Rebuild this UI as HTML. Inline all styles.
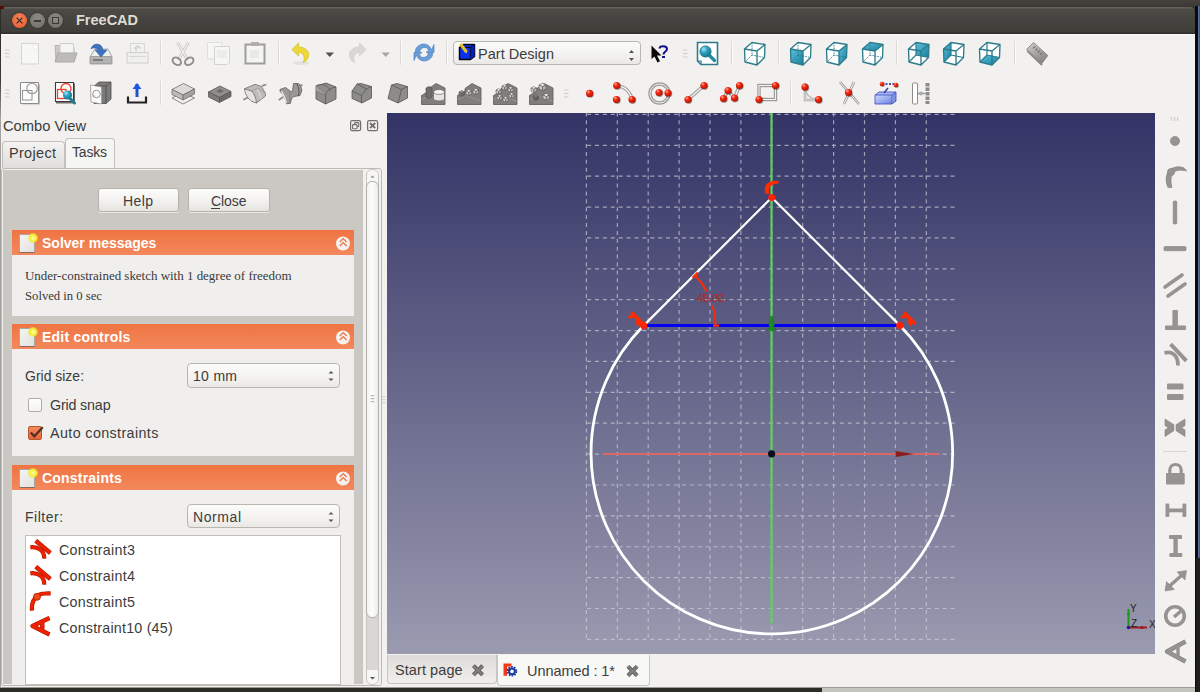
<!DOCTYPE html>
<html><head><meta charset="utf-8">
<style>
*{margin:0;padding:0;box-sizing:border-box}
html,body{width:1200px;height:692px;overflow:hidden;background:#2c2c28;font-family:"Liberation Sans",sans-serif;position:relative}
.a{position:absolute}
.t{white-space:nowrap}
svg{position:absolute;overflow:visible}

.btn{position:absolute;border:1px solid #b5b2ad;border-radius:3px;background:linear-gradient(#fdfdfc,#f1f0ee 60%,#e6e4e1);box-shadow:0 1px 0 rgba(255,255,255,.6)}
.combo{position:absolute;border:1px solid #b9b6b1;border-radius:4px;background:linear-gradient(#fbfbfa,#f3f2f0 60%,#e9e8e5)}
.hdr{position:absolute;background:linear-gradient(#ef7442,#f3885c)}
.sec{position:absolute;background:#f0efed}
.grip{position:absolute;width:4px;height:9px;background:repeating-linear-gradient(#c9c6c2 0 1px,transparent 1px 3px)}
.sep{position:absolute;width:1px;background:#dcdad6;box-shadow:1px 0 0 #fbfbfa}

</style></head><body>
<div class="a" style="left:0;top:0;width:1200px;height:10px;background:linear-gradient(#45423d,#3c3a36 6px,#36342f 7px)"></div>
<div class="a" style="left:1195px;top:6px;width:5px;height:686px;background:#0b0b0b"></div>
<div class="a" style="left:1198px;top:6px;width:2px;height:552px;background:linear-gradient(90deg,#6a7da8,#2f4c8c)"></div>
<div class="a" style="left:1196px;top:558px;width:4px;height:134px;background:#1e1e1c"></div>
<div class="a" style="left:822px;top:688px;width:373px;height:4px;background:#c6c4c1"></div>
<div class="a" style="left:1px;top:7px;width:1194px;height:27px;background:linear-gradient(#64615a 0,#64615a 1px,#4b4a45 2px,#3e3d39 25px,#2f2e2b 26px);border-radius:5px 5px 0 0"></div>
<div class="a" style="left:0;top:6px;width:4px;height:3px;background:#5a0a0a"></div>
<div class="a" style="left:12px;top:13px;width:15px;height:15px;border-radius:50%;background:radial-gradient(circle at 50% 35%,#f5835a,#e2592b);box-shadow:0 0 0 1px #3a3935"></div>
<svg style="left:12px;top:13px" width="15" height="15"><path d="M4.6 4.6L10.4 10.4M10.4 4.6L4.6 10.4" stroke="#3b2a22" stroke-width="1.3"/></svg>
<div class="a" style="left:30px;top:13px;width:15px;height:15px;border-radius:50%;background:radial-gradient(circle at 50% 35%,#8d8c86,#6b6a65);box-shadow:0 0 0 1px #3a3935"></div>
<div class="a" style="left:34px;top:20px;width:7px;height:1.5px;background:#3b3a36"></div>
<div class="a" style="left:47.5px;top:13px;width:15px;height:15px;border-radius:50%;background:radial-gradient(circle at 50% 35%,#8d8c86,#6b6a65);box-shadow:0 0 0 1px #3a3935"></div>
<div class="a" style="left:51.5px;top:17px;width:7px;height:7px;border:1.2px solid #3b3a36"></div>
<div class="a t" style="left:76px;top:10.98px;font-size:14.5px;line-height:18px;color:#dfdbd2;font-weight:bold;">FreeCAD</div>
<div class="a" style="left:1px;top:34px;width:1194px;height:653px;background:linear-gradient(#fdfdfd 0,#fdfdfd 1px,#f2f1f0 1px)"></div>
<div class="a" style="left:1px;top:687px;width:1194px;height:1px;background:#9c9a96"></div>
<div class="a" style="left:0;top:34px;width:1px;height:654px;background:linear-gradient(#2e2e2b 0,#3a3a37 45px,#a3a29f 85px,#a3a29f 100%)"></div>
<svg style="left:5px;top:49px" width="5" height="9"><path d="M0 1H4.5M0 4.5H4.5M0 8H4.5" stroke="#cfccc8" stroke-width="1"/></svg>
<svg style="left:5px;top:89px" width="5" height="9"><path d="M0 1H4.5M0 4.5H4.5M0 8H4.5" stroke="#cfccc8" stroke-width="1"/></svg>
<svg style="left:683px;top:49px" width="5" height="9"><path d="M0 1H4.5M0 4.5H4.5M0 8H4.5" stroke="#cfccc8" stroke-width="1"/></svg>
<svg style="left:564px;top:89px" width="5" height="9"><path d="M0 1H4.5M0 4.5H4.5M0 8H4.5" stroke="#cfccc8" stroke-width="1"/></svg>
<div class="a" style="left:160px;top:41px;width:1px;height:24px;background:#dad8d4"></div>
<div class="a" style="left:161px;top:41px;width:1px;height:24px;background:#fbfbfa"></div>
<div class="a" style="left:278px;top:41px;width:1px;height:24px;background:#dad8d4"></div>
<div class="a" style="left:279px;top:41px;width:1px;height:24px;background:#fbfbfa"></div>
<div class="a" style="left:400px;top:41px;width:1px;height:24px;background:#dad8d4"></div>
<div class="a" style="left:401px;top:41px;width:1px;height:24px;background:#fbfbfa"></div>
<div class="a" style="left:446px;top:41px;width:1px;height:24px;background:#dad8d4"></div>
<div class="a" style="left:447px;top:41px;width:1px;height:24px;background:#fbfbfa"></div>
<div class="a" style="left:731px;top:41px;width:1px;height:24px;background:#dad8d4"></div>
<div class="a" style="left:732px;top:41px;width:1px;height:24px;background:#fbfbfa"></div>
<div class="a" style="left:778px;top:41px;width:1px;height:24px;background:#dad8d4"></div>
<div class="a" style="left:779px;top:41px;width:1px;height:24px;background:#fbfbfa"></div>
<div class="a" style="left:896px;top:41px;width:1px;height:24px;background:#dad8d4"></div>
<div class="a" style="left:897px;top:41px;width:1px;height:24px;background:#fbfbfa"></div>
<div class="a" style="left:1014px;top:41px;width:1px;height:24px;background:#dad8d4"></div>
<div class="a" style="left:1015px;top:41px;width:1px;height:24px;background:#fbfbfa"></div>
<div class="a" style="left:160px;top:81px;width:1px;height:24px;background:#dad8d4"></div>
<div class="a" style="left:161px;top:81px;width:1px;height:24px;background:#fbfbfa"></div>
<div class="a" style="left:790px;top:81px;width:1px;height:24px;background:#dad8d4"></div>
<div class="a" style="left:791px;top:81px;width:1px;height:24px;background:#fbfbfa"></div>
<div class="combo" style="left:453px;top:41px;width:188px;height:24px"></div>
<div class="a t" style="left:478px;top:44.98px;font-size:14.5px;line-height:18px;color:#3c3c3c;letter-spacing:0.025px;">Part Design</div>
<svg style="left:0;top:0" width="1200" height="120" viewBox="0 0 1200 120"><defs><radialGradient id="teal" cx=".35" cy=".3" r=".8"><stop offset="0" stop-color="#a8e6f8"/><stop offset=".4" stop-color="#2aa0c0"/><stop offset="1" stop-color="#136f86"/></radialGradient><linearGradient id="teal2" x1="0" y1="0" x2="1" y2="1"><stop offset="0" stop-color="#5cc0dc"/><stop offset="1" stop-color="#14809e"/></linearGradient><radialGradient id="redp" cx=".35" cy=".3" r=".75"><stop offset="0" stop-color="#ffb0a0"/><stop offset=".35" stop-color="#f22a10"/><stop offset="1" stop-color="#b01000"/></radialGradient><linearGradient id="blueb" x1="0" y1="0" x2="1" y2="1"><stop offset="0" stop-color="#d0dcff"/><stop offset="1" stop-color="#6a80e0"/></linearGradient></defs><path d="M21.5 43.5H38.5V64H21.5Z" fill="#f7f7f6" stroke="#d6d5d3"/><circle cx="35.5" cy="47" r="2.5" fill="#fdfdfd" stroke="#e2e1df" stroke-width=".6"/><path d="M55 45.5H60L61 47.5H74V61.5H56Z" fill="#c9c8c6" stroke="#b5b4b2"/><path d="M60 43.5H73.5V55H60Z" fill="#f4f4f3" stroke="#cfcecc"/><path d="M58 53H77L74 62H55Z" fill="#bdbcba" stroke="#aaa9a7"/><path d="M95 49H108L112 57V64H90V57Z" fill="#efefee" stroke="#a9a8a6"/><path d="M90.5 56.5H111.5V63.5H90.5Z" fill="#b4b3b1" stroke="#a2a19f"/><path d="M93 60H103" stroke="#6e6d6b" stroke-width="1.5"/><path d="M91 49C92 44 99 42 102 47L103 50H107L101 57L95 50H98C97 48 93 47 91 49Z" fill="#3d72be" stroke="#2f5fa3" stroke-width=".6"/><path d="M130.5 43.5H144.5V53H130.5Z" fill="#f2f2f1" stroke="#d8d7d5"/><path d="M136 51V47M134.5 48.5L137.5 46L140.5 48.5" stroke="#cfcecc" stroke-width="1.5" fill="none"/><path d="M127 52.5H148V63H127Z" fill="#efefee" stroke="#cfcecc" rx="2"/><path d="M129 56.5H146" stroke="#d8d7d5"/><path d="M177.5 42.5L186.5 58M188.5 42.5L179.5 58" stroke="#c9c8c6" stroke-width="2.8" fill="none"/><path d="M177.5 42.5L186.5 58M188.5 42.5L179.5 58" stroke="#f2f2f1" stroke-width="1.2" fill="none"/><ellipse transform="rotate(35 176.8 61.3)" cx="176.8" cy="61.3" rx="4.6" ry="3.3" fill="none" stroke="#8f8e8c" stroke-width="2"/><ellipse transform="rotate(-35 189.2 61.3)" cx="189.2" cy="61.3" rx="4.6" ry="3.3" fill="none" stroke="#8f8e8c" stroke-width="2"/><path d="M207.5 42.5H222V59H207.5Z" fill="#f6f6f5" stroke="#e0dfdd"/><path d="M214.5 46.5H229.5V62L227 64.5H214.5Z" fill="#f6f6f5" stroke="#d4d3d1"/><path d="M217 51H227M217 53H227M217 55H226M217 57H227" stroke="#e3e2e0"/><path d="M245.5 44.5H264.5V63.5H245.5Z" fill="#f5f5f4" stroke="#9f9e9c" stroke-width="2"/><path d="M251 42H259V46H251Z" fill="#b0afad"/><path d="M248 48H262V61H248Z" fill="#f4f4f3"/><path d="M250 51H259M250 53H259M250 55H258M250 57H259" stroke="#dfdedc"/><ellipse cx="301" cy="63" rx="8" ry="2" fill="#000" fill-opacity=".06"/><path d="M292 49.5L298.5 43V47C305 47 309.5 51 308.5 56C308 60 305 62 303 62.5C305 60 305 52 298.5 52.5V56Z" fill="#ecd937" stroke="#d1bc1c" stroke-width=".7"/><path d="M325.5 52.5H334L329.75 57Z" fill="#505050"/><path d="M366 49.5L359.5 43V47C353 47 348.5 51 349.5 56C350 60 353 62 355 62.5C353 60 353 52 359.5 52.5V56Z" fill="#d9d8d6" stroke="#cfcecc" stroke-width=".7"/><path d="M381.5 52.5H390L385.75 57Z" fill="#a8a7a5"/><path d="M431.5 50C430 45 425 43 421 44.5C417 46 415 49 415.5 52L420 51.5C420 49 422 47.5 425 47.5C427 47.5 428 49 428.5 50.5L426 52.5H434V44.5Z" fill="#6b9dd8" stroke="#4f82c4" stroke-width=".7"/><path d="M416.5 55C418 60 423 62 427 60.5C431 59 433 56 432.5 53L428 53.5C428 56 426 57.5 423 57.5C421 57.5 420 56 419.5 54.5L422 52.5H414V60.5Z" fill="#6b9dd8" stroke="#4f82c4" stroke-width=".7"/><path d="M459.5 47.5L463.5 44.5H474.5V56.5L470.5 59.5H459.5Z" fill="#0a30f0" stroke="#050510" stroke-width="1.5" stroke-linejoin="round"/><path d="M459.5 47.5H470.5V59.5M470.5 47.5L474.5 44.5" stroke="#050510" fill="none" stroke-width="1.2"/><path d="M470.5 47.5L474.5 44.5V56.5L470.5 59.5Z" fill="#0520b0"/><path d="M460.5 44L466.5 52" stroke="#e6c020" stroke-width="3.2" stroke-linecap="butt"/><path d="M465 52.5L467 53.5L466.8 51.5Z" fill="#c8c0a0"/><path d="M629 53L631.5 50L634 53Z M629 58L631.5 61L634 58Z" fill="#555"/><path d="M651.5 45.5V59L654.5 56.5L657.5 62.5L660 61.3L657 55.5H661.5Z" fill="#0b0b0b"/><path d="M659.5 48.5C659.5 45.5 667 45 667 49C667 51.5 663.5 51.5 663.5 54.5" fill="none" stroke="#12128a" stroke-width="2"/><rect x="662" y="56" width="3" height="2" fill="#12128a"/><path d="M697.5 42.5H717.5V64.5H701L697.5 61Z" fill="#fff" stroke="#2d7b8b" stroke-width="1.6"/><path d="M697.5 61H701V64.5" fill="none" stroke="#2d7b8b" stroke-width="1.2"/><path d="M709 55L714.5 60.5" stroke="#1f8aa3" stroke-width="3.2" stroke-linecap="round"/><circle cx="705.5" cy="51.5" r="5.6" fill="url(#teal)" stroke="#1a6e80" stroke-width=".8"/><path d="M752.0 42.5L765.0 44.5L764.5 57.5L757.0 65.0L745.0 62.0L744.5 49.0Z" fill="#fff"/><path d="M752.0 42.5L752.0 55.0M752.0 55.0L745.0 62.0M752.0 55.0L764.5 57.5" stroke="#2d7b8b" stroke-width="0.9" stroke-dasharray="1.5 1" fill="none"/><path d="M752.0 42.5L765.0 44.5L764.5 57.5L757.0 65.0L745.0 62.0L744.5 49.0ZM744.5 49.0L757.0 51.0L765.0 44.5M757.0 51.0L757.0 65.0" stroke="#2d7b8b" stroke-width="1.35" fill="none" stroke-linejoin="round"/><path d="M798.0 42.5L811.0 44.5L810.5 57.5L803.0 65.0L791.0 62.0L790.5 49.0Z" fill="#fff"/><path d="M790.5 49.0L803.0 51.0L803.0 65.0L791.0 62.0Z" fill="url(#teal2)"/><path d="M798.0 42.5L798.0 55.0M798.0 55.0L791.0 62.0M798.0 55.0L810.5 57.5" stroke="#2d7b8b" stroke-width="0.9" stroke-dasharray="1.5 1" fill="none"/><path d="M798.0 42.5L811.0 44.5L810.5 57.5L803.0 65.0L791.0 62.0L790.5 49.0ZM790.5 49.0L803.0 51.0L811.0 44.5M803.0 51.0L803.0 65.0" stroke="#2d7b8b" stroke-width="1.35" fill="none" stroke-linejoin="round"/><path d="M834.0 42.5L847.0 44.5L846.5 57.5L839.0 65.0L827.0 62.0L826.5 49.0Z" fill="#fff"/><path d="M839.0 51.0L847.0 44.5L846.5 57.5L839.0 65.0Z" fill="url(#teal2)"/><path d="M834.0 42.5L834.0 55.0M834.0 55.0L827.0 62.0M834.0 55.0L846.5 57.5" stroke="#2d7b8b" stroke-width="0.9" stroke-dasharray="1.5 1" fill="none"/><path d="M834.0 42.5L847.0 44.5L846.5 57.5L839.0 65.0L827.0 62.0L826.5 49.0ZM826.5 49.0L839.0 51.0L847.0 44.5M839.0 51.0L839.0 65.0" stroke="#2d7b8b" stroke-width="1.35" fill="none" stroke-linejoin="round"/><path d="M870.0 42.5L883.0 44.5L882.5 57.5L875.0 65.0L863.0 62.0L862.5 49.0Z" fill="#fff"/><path d="M870.0 42.5L883.0 44.5L875.0 51.0L862.5 49.0Z" fill="url(#teal2)"/><path d="M870.0 42.5L870.0 55.0M870.0 55.0L863.0 62.0M870.0 55.0L882.5 57.5" stroke="#2d7b8b" stroke-width="0.9" stroke-dasharray="1.5 1" fill="none"/><path d="M870.0 42.5L883.0 44.5L882.5 57.5L875.0 65.0L863.0 62.0L862.5 49.0ZM862.5 49.0L875.0 51.0L883.0 44.5M875.0 51.0L875.0 65.0" stroke="#2d7b8b" stroke-width="1.35" fill="none" stroke-linejoin="round"/><path d="M916.0 42.5L929.0 44.5L928.5 57.5L921.0 65.0L909.0 62.0L908.5 49.0Z" fill="#fff"/><path d="M916.0 42.5L929.0 44.5L928.5 57.5L916.0 55.0Z" fill="url(#teal2)"/><path d="M916.0 42.5L916.0 55.0M916.0 55.0L909.0 62.0M916.0 55.0L928.5 57.5" stroke="#2d7b8b" stroke-width="1.2" stroke-dasharray="none" fill="none"/><path d="M916.0 42.5L929.0 44.5L928.5 57.5L921.0 65.0L909.0 62.0L908.5 49.0ZM908.5 49.0L921.0 51.0L929.0 44.5M921.0 51.0L921.0 65.0" stroke="#2d7b8b" stroke-width="1.35" fill="none" stroke-linejoin="round"/><path d="M951.0 42.5L964.0 44.5L963.5 57.5L956.0 65.0L944.0 62.0L943.5 49.0Z" fill="#fff"/><path d="M943.5 49.0L951.0 42.5L951.0 55.0L944.0 62.0Z" fill="url(#teal2)"/><path d="M951.0 42.5L951.0 55.0M951.0 55.0L944.0 62.0M951.0 55.0L963.5 57.5" stroke="#2d7b8b" stroke-width="1.2" stroke-dasharray="none" fill="none"/><path d="M951.0 42.5L964.0 44.5L963.5 57.5L956.0 65.0L944.0 62.0L943.5 49.0ZM943.5 49.0L956.0 51.0L964.0 44.5M956.0 51.0L956.0 65.0" stroke="#2d7b8b" stroke-width="1.35" fill="none" stroke-linejoin="round"/><path d="M987.0 42.5L1000.0 44.5L999.5 57.5L992.0 65.0L980.0 62.0L979.5 49.0Z" fill="#fff"/><path d="M980.0 62.0L987.0 55.0L999.5 57.5L992.0 65.0Z" fill="url(#teal2)"/><path d="M987.0 42.5L987.0 55.0M987.0 55.0L980.0 62.0M987.0 55.0L999.5 57.5" stroke="#2d7b8b" stroke-width="1.2" stroke-dasharray="none" fill="none"/><path d="M987.0 42.5L1000.0 44.5L999.5 57.5L992.0 65.0L980.0 62.0L979.5 49.0ZM979.5 49.0L992.0 51.0L1000.0 44.5M992.0 51.0L992.0 65.0" stroke="#2d7b8b" stroke-width="1.35" fill="none" stroke-linejoin="round"/><defs><linearGradient id="rul" x1="0" y1="0" x2=".6" y2="1"><stop offset="0" stop-color="#d2d1cf"/><stop offset="1" stop-color="#858482"/></linearGradient></defs><path d="M1033.5 42.5L1047.8 55.5L1041 64.5L1026.5 49.5Z" fill="url(#rul)" stroke="#7a7977" stroke-width=".8" stroke-linejoin="round"/><path d="M1027.5 51L1042 65" stroke="#8c8b89" stroke-width="2"/><path d="M1035 46.5L1033.2 48.3M1037.3 48.6L1035.5 50.4M1039.6 50.7L1037.8 52.5M1041.9 52.8L1040.1 54.6" stroke="#6e6d6b" stroke-width="1.2"/><path d="M21.5 84.5H40V104.5H22.5Z" fill="#bdbcba"/><path d="M20.5 82.5H38.5V103.5H20.5Z" fill="#fdfdfd" stroke="#8c8b89"/><circle cx="32" cy="88.5" r="5.3" fill="none" stroke="#9a9997" stroke-width="1.1"/><rect x="22.5" y="90.5" width="9.5" height="9.5" fill="none" stroke="#9a9997" stroke-width="1.1"/><path d="M56 83.5H75V103.5H56Z" fill="#6e6d6b"/><path d="M55.5 82.5H73.5V101.5H55.5Z" fill="#fdfdfd" stroke="#3c3b39" stroke-width="1.1"/><circle cx="66" cy="88.5" r="5" fill="none" stroke="#ee4030" stroke-width="1.3"/><rect x="57.5" y="89.5" width="8.5" height="9" fill="none" stroke="#ee4030" stroke-width="1.3"/><path d="M70 98.5L74.5 103" stroke="#1a7f95" stroke-width="3" stroke-linecap="round"/><circle cx="67.5" cy="95" r="4.6" fill="url(#teal)"/><path d="M94 86L99 82H111V99L106 103.5H94Z" fill="#7b7a78" stroke="#4e4d4b" stroke-width=".8"/><path d="M94 86H106V103.5M106 86L111 82" fill="none" stroke="#4e4d4b" stroke-width=".8"/><path d="M90.5 85L101.5 87V104L91 102Z" fill="#fbfbfb" stroke="#9a9997" stroke-width=".8"/><circle cx="96.5" cy="94" r="3.8" fill="none" stroke="#8c8b89" stroke-width=".9"/><path d="M92 96H95" stroke="#aaa" stroke-width=".8"/><path d="M128 96.5V102.5H146V96.5" stroke="#222" stroke-width="2.2" fill="none"/><path d="M137 84V97" stroke="#1f55c8" stroke-width="3"/><path d="M132.5 89L137 83L141.5 89Z" fill="#1f55e8"/><path d="M172 98L183 104L194.5 98" fill="none" stroke="#7d7c7a" stroke-width=".9"/><path d="M176 96L172 98M190 96L194.5 98" stroke="#7d7c7a" stroke-width=".9"/><path d="M172 89.5L183.5 83.5L194.5 89L183 95Z" fill="#dcdbd9" stroke="#6e6d6b" stroke-width=".8"/><path d="M172 89.5L183 95V100L172 94.5Z" fill="#bebdbb" stroke="#6e6d6b" stroke-width=".8"/><path d="M183 95L194.5 89V94L183 100Z" fill="#a4a3a1" stroke="#6e6d6b" stroke-width=".8"/><path d="M208.5 92L220 86L231 91.5L219.5 97.5Z" fill="#8f8e8c" stroke="#555" stroke-width=".8"/><path d="M208.5 92L219.5 97.5V102.5L208.5 97Z" fill="#7d7c7a" stroke="#555" stroke-width=".8"/><path d="M219.5 97.5L231 91.5V96.5L219.5 102.5Z" fill="#6c6b69" stroke="#555" stroke-width=".8"/><path d="M216 91L220 89L224 91L220 93Z" fill="#6a6967"/><path d="M243.3 99.8L249.5 96.8M262 85.8L266.3 84.5" stroke="#8c8b89" stroke-width="1.8"/><path d="M244.5 88.8L255 84.3L261.5 86.5L265.5 93.5V96L256.5 103L249 92Z" fill="#bdbcba" stroke="#6e6d6b" stroke-width=".8" stroke-linejoin="round"/><path d="M244.5 88.8L251.5 91C254.5 94 256 98 256.5 103L252 101.5C248 99 245 94 244.5 88.8Z" fill="#e4e3e1" stroke="#6e6d6b" stroke-width=".8"/><path d="M251.5 91L258 88L265.5 93.5" stroke="#8a8987" stroke-width=".6" fill="none"/><path d="M257 89.5C259.5 92 260.5 95 261 99" stroke="#d6d5d3" stroke-width="1.3" fill="none"/><path d="M278.8 100L283.3 97.1M299.2 85.8L302.5 84.8" stroke="#8c8b89" stroke-width="1.8"/><path d="M280 89.5L285.5 87.5L289.5 90.5C290.5 91.5 291.5 92 292.5 91.5L293.5 83.5L298.5 83.5C300.5 85 302 88 301.7 91L300 95.5L294 96.5C292.5 97 291 99 290.5 103.3L286.5 103.8C285 98 283 93.5 280 91.5Z" fill="#9a9997" stroke="#5e5d5b" stroke-width=".8" stroke-linejoin="round"/><path d="M281.5 91C284 95 285.5 99 286.3 103" stroke="#ecebea" stroke-width="1.3" fill="none"/><path d="M296.8 84C299 87 299.5 92 298.3 96" stroke="#5a5957" stroke-width="1" fill="none"/><path d="M289.5 90.5L290 103" stroke="#7a7977" stroke-width=".8"/><path d="M316 86L326 83L336 87V99L325.5 104L316 99Z" fill="#8d8c8a" stroke="#555" stroke-width=".8"/><path d="M316 91L325.5 95.5V104M325.5 95.5C326 91 330 88 336 87M316 86C318 84 324 84 326 86C330 88 330 91 330 91" fill="none" stroke="#5a5957" stroke-width=".8"/><path d="M316 86V91L325.5 95.5" fill="#9e9d9b"/><path d="M352 91L357 84L361 83.5L371.5 86.5V98L362 103L352 98.5Z" fill="#8d8c8a" stroke="#555" stroke-width=".8"/><path d="M352 91L361.5 95.5L366.5 89M361.5 95.5V103M357 84L366.5 89L371.5 86.5" fill="none" stroke="#555" stroke-width=".8"/><path d="M391.5 85L397 83.5L407.5 86.5V98L398 103L388 98.5Z" fill="#8d8c8a" stroke="#555" stroke-width=".8"/><path d="M391.5 85L401.5 89.5L398 103M401.5 89.5L407.5 86.5" fill="none" stroke="#555" stroke-width=".8"/><path d="M421.5 95.5L429 91V88.5L436 83.5L445 88V104.5H421.5Z" fill="#7f7e7c" stroke="#5a5957" stroke-width=".8"/><path d="M421.5 99.5L430 95.5L445 101.5" fill="none" stroke="#9a9997" stroke-width=".8"/><path d="M426 88L429 86.5L432 88V97L429 98.5L426 97Z" fill="#6f6e6c" stroke="#4a4947" stroke-width=".6"/><path d="M433.5 92V99C435 101.5 443 101.5 444.5 99V92Z" fill="#e6e5e3" stroke="#5a5957" stroke-width=".6"/><ellipse cx="439" cy="92" rx="5.5" ry="2.4" fill="#f6f6f5" stroke="#5a5957" stroke-width=".6"/><path d="M457.5 95.5L465 91V88.5L472 83.5L481 88V104.5H457.5Z" fill="#7f7e7c" stroke="#5a5957" stroke-width=".8"/><path d="M457.5 99.5L466 95.5L481 101.5" fill="none" stroke="#9a9997" stroke-width=".8"/><path d="M459 92L461.8 90.6L464.6 92L461.8 93.4Z" fill="#9a9997" stroke="#5a5957" stroke-width=".6"/><path d="M459 92L461.8 93.4V96.48L459 95.08Z" fill="#7c7b79" stroke="#5a5957" stroke-width=".6"/><path d="M461.8 93.4L464.6 92V95.08L461.8 96.48Z" fill="#6a6967" stroke="#5a5957" stroke-width=".6"/><path d="M466 91L468.8 89.6L471.6 91L468.8 92.4Z" fill="#f4f4f3" stroke="#5a5957" stroke-width=".6"/><path d="M466 91L468.8 92.4V95.48L466 94.08Z" fill="#d6d5d3" stroke="#5a5957" stroke-width=".6"/><path d="M468.8 92.4L471.6 91V94.08L468.8 95.48Z" fill="#b9b8b6" stroke="#5a5957" stroke-width=".6"/><path d="M473 90L475.8 88.6L478.6 90L475.8 91.4Z" fill="#f4f4f3" stroke="#5a5957" stroke-width=".6"/><path d="M473 90L475.8 91.4V94.48L473 93.08Z" fill="#d6d5d3" stroke="#5a5957" stroke-width=".6"/><path d="M475.8 91.4L478.6 90V93.08L475.8 94.48Z" fill="#b9b8b6" stroke="#5a5957" stroke-width=".6"/><path d="M493.5 95.5L501 91V88.5L508 83.5L517 88V104.5H493.5Z" fill="#7f7e7c" stroke="#5a5957" stroke-width=".8"/><path d="M493.5 99.5L502 95.5L517 101.5" fill="none" stroke="#9a9997" stroke-width=".8"/><path d="M496 90L498.6 88.7L501.2 90L498.6 91.3Z" fill="#f4f4f3" stroke="#5a5957" stroke-width=".6"/><path d="M496 90L498.6 91.3V94.16L496 92.86Z" fill="#d6d5d3" stroke="#5a5957" stroke-width=".6"/><path d="M498.6 91.3L501.2 90V92.86L498.6 94.16Z" fill="#b9b8b6" stroke="#5a5957" stroke-width=".6"/><path d="M502 86L504.6 84.7L507.2 86L504.6 87.3Z" fill="#f4f4f3" stroke="#5a5957" stroke-width=".6"/><path d="M502 86L504.6 87.3V90.16L502 88.86Z" fill="#d6d5d3" stroke="#5a5957" stroke-width=".6"/><path d="M504.6 87.3L507.2 86V88.86L504.6 90.16Z" fill="#b9b8b6" stroke="#5a5957" stroke-width=".6"/><path d="M508 88L510.6 86.7L513.2 88L510.6 89.3Z" fill="#f4f4f3" stroke="#5a5957" stroke-width=".6"/><path d="M508 88L510.6 89.3V92.16L508 90.86Z" fill="#d6d5d3" stroke="#5a5957" stroke-width=".6"/><path d="M510.6 89.3L513.2 88V90.86L510.6 92.16Z" fill="#b9b8b6" stroke="#5a5957" stroke-width=".6"/><path d="M509 94L511.6 92.7L514.2 94L511.6 95.3Z" fill="#f4f4f3" stroke="#5a5957" stroke-width=".6"/><path d="M509 94L511.6 95.3V98.16L509 96.86Z" fill="#d6d5d3" stroke="#5a5957" stroke-width=".6"/><path d="M511.6 95.3L514.2 94V96.86L511.6 98.16Z" fill="#b9b8b6" stroke="#5a5957" stroke-width=".6"/><path d="M503 98L505.6 96.7L508.2 98L505.6 99.3Z" fill="#f4f4f3" stroke="#5a5957" stroke-width=".6"/><path d="M503 98L505.6 99.3V102.16L503 100.86Z" fill="#d6d5d3" stroke="#5a5957" stroke-width=".6"/><path d="M505.6 99.3L508.2 98V100.86L505.6 102.16Z" fill="#b9b8b6" stroke="#5a5957" stroke-width=".6"/><path d="M497 96L499.6 94.7L502.2 96L499.6 97.3Z" fill="#f4f4f3" stroke="#5a5957" stroke-width=".6"/><path d="M497 96L499.6 97.3V100.16L497 98.86Z" fill="#d6d5d3" stroke="#5a5957" stroke-width=".6"/><path d="M499.6 97.3L502.2 96V98.86L499.6 100.16Z" fill="#b9b8b6" stroke="#5a5957" stroke-width=".6"/><path d="M529.5 95.5L537 91V88.5L544 83.5L553 88V104.5H529.5Z" fill="#7f7e7c" stroke="#5a5957" stroke-width=".8"/><path d="M529.5 99.5L538 95.5L553 101.5" fill="none" stroke="#9a9997" stroke-width=".8"/><path d="M531 88L533.8 86.6L536.6 88L533.8 89.4Z" fill="#f4f4f3" stroke="#5a5957" stroke-width=".6"/><path d="M531 88L533.8 89.4V92.48L531 91.08Z" fill="#d6d5d3" stroke="#5a5957" stroke-width=".6"/><path d="M533.8 89.4L536.6 88V91.08L533.8 92.48Z" fill="#b9b8b6" stroke="#5a5957" stroke-width=".6"/><path d="M539 85L542.5 83.25L546.0 85L542.5 86.75Z" fill="#e8e7e5" stroke="#5a5957" stroke-width=".6"/><path d="M539 85L542.5 86.75V90.6L539 88.85Z" fill="#cfcecc" stroke="#5a5957" stroke-width=".6"/><path d="M542.5 86.75L546.0 85V88.85L542.5 90.6Z" fill="#b3b2b0" stroke="#5a5957" stroke-width=".6"/><path d="M533 96L535.8 94.6L538.6 96L535.8 97.4Z" fill="#8a8987" stroke="#5a5957" stroke-width=".6"/><path d="M533 96L535.8 97.4V100.48L533 99.08Z" fill="#6f6e6c" stroke="#5a5957" stroke-width=".6"/><path d="M535.8 97.4L538.6 96V99.08L535.8 100.48Z" fill="#5e5d5b" stroke="#5a5957" stroke-width=".6"/><path d="M543 95L546.2 93.4L549.4 95L546.2 96.6Z" fill="#f4f4f3" stroke="#5a5957" stroke-width=".6"/><path d="M543 95L546.2 96.6V100.11999999999999L543 98.52Z" fill="#d6d5d3" stroke="#5a5957" stroke-width=".6"/><path d="M546.2 96.6L549.4 95V98.52L546.2 100.11999999999999Z" fill="#b9b8b6" stroke="#5a5957" stroke-width=".6"/><circle cx="590.3000000000001" cy="94.2" r="3.6" fill="#000" fill-opacity=".35"/><circle cx="589.6" cy="93.4" r="3.6" fill="url(#redp)"/><path d="M617 86C624 86 630 91 632 99" stroke="#9c9b99" stroke-width="3.4" fill="none"/><path d="M617 86C624 86 630 91 632 99" stroke="#f4f4f3" stroke-width="1.3" fill="none"/><circle cx="617.4000000000001" cy="86.3" r="3.6" fill="#000" fill-opacity=".35"/><circle cx="616.7" cy="85.5" r="3.6" fill="url(#redp)"/><circle cx="617.2" cy="100.3" r="3.6" fill="#000" fill-opacity=".35"/><circle cx="616.5" cy="99.5" r="3.6" fill="url(#redp)"/><circle cx="632.7" cy="100.3" r="3.6" fill="#000" fill-opacity=".35"/><circle cx="632" cy="99.5" r="3.6" fill="url(#redp)"/><circle cx="659.5" cy="93.5" r="9.5" fill="none" stroke="#9c9b99" stroke-width="3.4"/><circle cx="659.5" cy="93.5" r="9.5" fill="none" stroke="#f4f4f3" stroke-width="1"/><circle cx="659.7" cy="93.3" r="3.6" fill="#000" fill-opacity=".35"/><circle cx="659" cy="92.5" r="3.6" fill="url(#redp)"/><circle cx="668.7" cy="93.8" r="3.6" fill="#000" fill-opacity=".35"/><circle cx="668" cy="93" r="3.6" fill="url(#redp)"/><path d="M688 99.5L704 85.5" stroke="#9c9b99" stroke-width="3.6" fill="none"/><path d="M688 99.5L704 85.5" stroke="#f4f4f3" stroke-width="1.4" fill="none"/><circle cx="688.7" cy="100.3" r="3.6" fill="#000" fill-opacity=".35"/><circle cx="688" cy="99.5" r="3.6" fill="url(#redp)"/><circle cx="704.7" cy="86.3" r="3.6" fill="#000" fill-opacity=".35"/><circle cx="704" cy="85.5" r="3.6" fill="url(#redp)"/><path d="M723.5 98.5L728 90.5L734.5 98L739.5 85.5" stroke="#9c9b99" stroke-width="3.4" fill="none"/><path d="M723.5 98.5L728 90.5L734.5 98L739.5 85.5" stroke="#f4f4f3" stroke-width="1.3" fill="none"/><circle cx="724.2" cy="99.3" r="3.6" fill="#000" fill-opacity=".35"/><circle cx="723.5" cy="98.5" r="3.6" fill="url(#redp)"/><circle cx="728.7" cy="91.3" r="3.6" fill="#000" fill-opacity=".35"/><circle cx="728" cy="90.5" r="3.6" fill="url(#redp)"/><circle cx="735.2" cy="98.8" r="3.6" fill="#000" fill-opacity=".35"/><circle cx="734.5" cy="98" r="3.6" fill="url(#redp)"/><circle cx="740.2" cy="86.3" r="3.6" fill="#000" fill-opacity=".35"/><circle cx="739.5" cy="85.5" r="3.6" fill="url(#redp)"/><rect x="759" y="85.5" width="16.5" height="14" fill="none" stroke="#9c9b99" stroke-width="3.4"/><rect x="759" y="85.5" width="16.5" height="14" fill="none" stroke="#f4f4f3" stroke-width="1"/><circle cx="759.7" cy="100.3" r="3.6" fill="#000" fill-opacity=".35"/><circle cx="759" cy="99.5" r="3.6" fill="url(#redp)"/><circle cx="776.2" cy="86.3" r="3.6" fill="#000" fill-opacity=".35"/><circle cx="775.5" cy="85.5" r="3.6" fill="url(#redp)"/><path d="M805 83V100H822" stroke="#a5a4a2" stroke-width="2.4" fill="none"/><path d="M805 88C806 96 812 99 818 99.5" stroke="#bbb" stroke-width="1.4" fill="none"/><path d="M805 83V100H822" stroke="#f4f4f3" stroke-width=".8" fill="none"/><circle cx="805.7" cy="87.8" r="3.6" fill="#000" fill-opacity=".35"/><circle cx="805" cy="87" r="3.6" fill="url(#redp)"/><circle cx="819.2" cy="100.3" r="3.6" fill="#000" fill-opacity=".35"/><circle cx="818.5" cy="99.5" r="3.6" fill="url(#redp)"/><path d="M840 82L859 104M854 82L844 104" stroke="#9a9997" stroke-width="2.6"/><path d="M840 82L859 104M854 82L844 104" stroke="#f4f4f3" stroke-width="1"/><circle cx="849.2" cy="93.3" r="3.6" fill="#000" fill-opacity=".35"/><circle cx="848.5" cy="92.5" r="3.6" fill="url(#redp)"/><path d="M875 95L879 92H896V101L892 104H875Z" fill="#a8b8f0"/><path d="M875 95H892V104H875Z" fill="url(#blueb)" stroke="#3a4ac0" stroke-width=".8"/><path d="M892 95L896 92V101L892 104" fill="#7f92e0" stroke="#3a4ac0" stroke-width=".8"/><path d="M875 95L879 92H896" fill="none" stroke="#3a4ac0" stroke-width=".8"/><path d="M884 93L888 88" stroke="#2a3aa0" stroke-width="1.4"/><path d="M882 84H896" stroke="#1a1a8a" stroke-width="1.6" stroke-dasharray="2 1.5"/><circle cx="882.7" cy="84.8" r="2.3" fill="#000" fill-opacity=".35"/><circle cx="882" cy="84" r="2.3" fill="url(#redp)"/><circle cx="896.7" cy="85.8" r="2.3" fill="#000" fill-opacity=".35"/><circle cx="896" cy="85" r="2.3" fill="url(#redp)"/><rect x="912.5" y="83" width="5" height="21" rx="1" fill="#fff" stroke="#8c8b89"/><path d="M918 93.5H925" stroke="#8c8b89" stroke-width="1.2"/><circle cx="921" cy="93.5" r="2" fill="#aaa"/><path d="M927.5 83V104" stroke="#8c8b89" stroke-width="4" stroke-dasharray="3.5 1"/></svg>
<div class="a t" style="left:3px;top:116.91px;font-size:14.7px;line-height:18px;color:#3c3c3c;">Combo View</div>
<svg style="left:350px;top:120px" width="30" height="12"><rect x="0.6" y="0.6" width="10" height="10" rx="1.6" fill="none" stroke="#6f6e6a" stroke-width="1.2"/><rect x="4.6" y="2.6" width="4.2" height="4.2" rx=".6" fill="#f2f1f0" stroke="#6f6e6a" stroke-width="1.1"/><rect x="2.6" y="4.6" width="4.4" height="4.2" rx=".6" fill="#f2f1f0" stroke="#6f6e6a" stroke-width="1.1"/><rect x="17.6" y="0.6" width="10" height="10" rx="1.6" fill="none" stroke="#6f6e6a" stroke-width="1.2"/><path d="M20 3L25.2 8.2M25.2 3L20 8.2" stroke="#6f6e6a" stroke-width="1.8"/></svg>
<div class="a" style="left:2px;top:141px;width:63px;height:27px;border:1px solid #c4c1bc;border-bottom:none;border-radius:4px 4px 0 0;background:linear-gradient(#f4f3f1,#e0dedb)"></div>
<div class="a" style="left:65px;top:138px;width:50px;height:31px;border:1px solid #c4c1bc;border-bottom:none;border-radius:4px 4px 0 0;background:#f5f5f4"></div>
<div class="a t" style="left:9px;top:143.98px;font-size:14.5px;line-height:18px;color:#3c3c3c;letter-spacing:0.312px;">Project</div>
<div class="a t" style="left:72px;top:143.15px;font-size:14px;line-height:18px;color:#3c3c3c;letter-spacing:-0.195px;">Tasks</div>
<div class="a" style="left:1px;top:168px;width:381px;height:518px;border:1px solid #bdbab5;border-radius:3px;background:#f2f1f0"></div>
<div class="a" style="left:3px;top:170px;width:360px;height:514px;background:linear-gradient(90deg,#cbc8c4 0,#cbc8c4 359px,#c6c4c1 359px)"></div>
<div class="btn" style="left:98px;top:188px;width:81px;height:24px"></div>
<div class="btn" style="left:188px;top:188px;width:82px;height:24px"></div>
<div class="a t" style="left:123px;top:191.65px;font-size:14px;line-height:18px;color:#3c3c3c;letter-spacing:0.406px;">Help</div>
<div class="a t" style="left:211px;top:191.65px;font-size:14px;line-height:18px;color:#3c3c3c;letter-spacing:-0.070px;">Close</div>
<div class="a" style="left:211px;top:208px;width:9px;height:1px;background:#3c3c3c"></div>
<div class="hdr" style="left:12px;top:230px;width:342px;height:25px"></div>
<div class="a" style="left:19px;top:233.5px;width:16px;height:19px;border:1px solid #a9a6a2;border-bottom:1.5px solid #8a6a5a;background:linear-gradient(135deg,#f4f4f3,#e2e1df)"></div>
<div class="a" style="left:27.5px;top:232.5px;width:10px;height:10px;border-radius:50%;background:radial-gradient(#fffcc0 0,#f4ef30 45%,rgba(240,235,40,.5) 70%,rgba(240,230,40,0) 100%)"></div>
<div class="a t" style="left:42px;top:233.85px;font-size:14px;line-height:18px;color:#ffffff;font-weight:bold;">Solver messages</div>
<svg style="left:335px;top:234.5px" width="16" height="16"><circle cx="8" cy="8.5" r="7" fill="#f4f1ee"/><path d="M4.8 7L8.2 3.6L11.6 7M4.8 11L8.2 7.6L11.6 11" fill="none" stroke="#ee7444" stroke-width="1.3"/></svg>
<div class="sec" style="left:12px;top:255px;width:342px;height:61px"></div>
<div class="a t" style="left:25px;top:267.61px;font-size:13px;line-height:16px;color:#3a3a3a;font-family:'Liberation Serif',serif;letter-spacing:-0.021px;">Under-constrained sketch with 1 degree of freedom</div>
<div class="a t" style="left:25px;top:287.71px;font-size:12.7px;line-height:16px;color:#3a3a3a;font-family:'Liberation Serif',serif;letter-spacing:-0.012px;">Solved in 0 sec</div>
<div class="hdr" style="left:12px;top:324px;width:342px;height:25px"></div>
<div class="a" style="left:19px;top:327.5px;width:16px;height:19px;border:1px solid #a9a6a2;border-bottom:1.5px solid #8a6a5a;background:linear-gradient(135deg,#f4f4f3,#e2e1df)"></div>
<div class="a" style="left:27.5px;top:326.5px;width:10px;height:10px;border-radius:50%;background:radial-gradient(#fffcc0 0,#f4ef30 45%,rgba(240,235,40,.5) 70%,rgba(240,230,40,0) 100%)"></div>
<div class="a t" style="left:42px;top:327.85px;font-size:14px;line-height:18px;color:#ffffff;font-weight:bold;letter-spacing:0.231px;">Edit controls</div>
<svg style="left:335px;top:328.5px" width="16" height="16"><circle cx="8" cy="8.5" r="7" fill="#f4f1ee"/><path d="M4.8 7L8.2 3.6L11.6 7M4.8 11L8.2 7.6L11.6 11" fill="none" stroke="#ee7444" stroke-width="1.3"/></svg>
<div class="sec" style="left:12px;top:349px;width:342px;height:107px"></div>
<div class="a t" style="left:25px;top:366.75px;font-size:14px;line-height:18px;color:#3c3c3c;letter-spacing:-0.012px;">Grid size:</div>
<div class="combo" style="left:187px;top:363px;width:153px;height:25px"></div>
<div class="a t" style="left:193px;top:366.65px;font-size:14px;line-height:18px;color:#3c3c3c;letter-spacing:0.309px;">10 mm</div>
<svg style="left:327px;top:369px" width="8" height="14"><path d="M1.5 4.5L4 2L6.5 4.5Z M1.5 9.5L4 12L6.5 9.5Z" fill="#555"/></svg>
<div class="a" style="left:28px;top:398px;width:14px;height:14px;border:1px solid #b0ada8;border-radius:2px;background:linear-gradient(#fff,#f3f2f0)"></div>
<div class="a t" style="left:50px;top:396.05px;font-size:14.3px;line-height:18px;color:#3c3c3c;letter-spacing:-0.175px;">Grid snap</div>
<div class="a" style="left:28px;top:426px;width:14px;height:14px;border:1px solid #b8552c;border-radius:2px;background:linear-gradient(#f28a5e,#e6683a)"></div>
<svg style="left:28px;top:424px" width="18" height="18"><path d="M2.8 8.5L6.3 12.3L14.8 3.2" fill="none" stroke="#55301f" stroke-width="2.3"/></svg>
<div class="a t" style="left:50px;top:423.55px;font-size:14.3px;line-height:18px;color:#3c3c3c;letter-spacing:0.391px;">Auto constraints</div>
<div class="hdr" style="left:12px;top:465px;width:342px;height:25px"></div>
<div class="a" style="left:19px;top:468.5px;width:16px;height:19px;border:1px solid #a9a6a2;border-bottom:1.5px solid #8a6a5a;background:linear-gradient(135deg,#f4f4f3,#e2e1df)"></div>
<div class="a" style="left:27.5px;top:467.5px;width:10px;height:10px;border-radius:50%;background:radial-gradient(#fffcc0 0,#f4ef30 45%,rgba(240,235,40,.5) 70%,rgba(240,230,40,0) 100%)"></div>
<div class="a t" style="left:42px;top:468.85px;font-size:14px;line-height:18px;color:#ffffff;font-weight:bold;letter-spacing:0.205px;">Constraints</div>
<svg style="left:335px;top:469.5px" width="16" height="16"><circle cx="8" cy="8.5" r="7" fill="#f4f1ee"/><path d="M4.8 7L8.2 3.6L11.6 7M4.8 11L8.2 7.6L11.6 11" fill="none" stroke="#ee7444" stroke-width="1.3"/></svg>
<div class="sec" style="left:12px;top:490px;width:342px;height:194px"></div>
<div class="a t" style="left:25px;top:507.75px;font-size:14px;line-height:18px;color:#3c3c3c;letter-spacing:0.503px;">Filter:</div>
<div class="combo" style="left:187px;top:504px;width:153px;height:24px"></div>
<div class="a t" style="left:193px;top:507.65px;font-size:14px;line-height:18px;color:#3c3c3c;letter-spacing:0.581px;">Normal</div>
<svg style="left:327px;top:510px" width="8" height="14"><path d="M1.5 4.5L4 2L6.5 4.5Z M1.5 9.5L4 12L6.5 9.5Z" fill="#555"/></svg>
<div class="a" style="left:25px;top:535px;width:316px;height:150px;border:1px solid #c2bfba;background:#fff"></div>
<div class="a t" style="left:59px;top:540.55px;font-size:14.3px;line-height:18px;color:#3c3c3c;letter-spacing:0.287px;">Constraint3</div>
<div class="a t" style="left:59px;top:566.55px;font-size:14.3px;line-height:18px;color:#3c3c3c;letter-spacing:0.287px;">Constraint4</div>
<div class="a t" style="left:59px;top:592.55px;font-size:14.3px;line-height:18px;color:#3c3c3c;letter-spacing:0.287px;">Constraint5</div>
<div class="a t" style="left:59px;top:618.55px;font-size:14.3px;line-height:18px;color:#3c3c3c;letter-spacing:0.201px;">Constraint10 (45)</div>
<div class="a" style="left:366px;top:169px;width:13px;height:516px;border:1px solid #c9c6c1;border-radius:6px;background:linear-gradient(#f6f6f5 0,#f6f6f5 15px,#d9d7d4 15px,#d9d7d4 500px,#f6f6f5 500px)"></div>
<div class="a" style="left:366px;top:181px;width:13px;height:437px;border:1px solid #b3b0ab;border-radius:6px;background:linear-gradient(90deg,#f3f3f2,#fdfdfd 50%,#ebeae8)"></div>
<svg style="left:367px;top:170px" width="11" height="516"><path d="M3.5 7.5L5.5 5.5L7.5 7.5Z" fill="#888"/><path d="M3 507L5.5 509.5L8 507Z" fill="#555"/></svg>
<svg style="left:370px;top:394px" width="17" height="10"><path d="M0.7 1.7H4.2M0.7 4.7H4.2M0.7 7.7H4.2" stroke="#b9b7b3" stroke-width="1.3"/><path d="M12 2.7H15.7M12 5.7H15.7M12 8.7H15.7" stroke="#d6d4d0" stroke-width="1.3"/></svg>
<div class="a" style="left:387px;top:113px;width:768px;height:541px;background:linear-gradient(#333366,#9a9ab0)"></div>
<svg style="left:0;top:0" width="1200" height="692" viewBox="0 0 1200 692"><defs><clipPath id="vpc"><rect x="387" y="113" width="768" height="541"/></clipPath></defs><g clip-path="url(#vpc)"><path d="M586.40 112.42V639.38M617.30 112.42V639.38M648.20 112.42V639.38M679.10 112.42V639.38M710.00 112.42V639.38M740.90 112.42V639.38M771.80 112.42V639.38M802.70 112.42V639.38M833.60 112.42V639.38M864.50 112.42V639.38M895.40 112.42V639.38M926.30 112.42V639.38M587.10 114.42H957.20M587.10 145.30H957.20M587.10 176.18H957.20M587.10 207.06H957.20M587.10 237.94H957.20M587.10 268.82H957.20M587.10 299.70H957.20M587.10 330.58H957.20M587.10 361.46H957.20M587.10 392.34H957.20M587.10 423.22H957.20M587.10 454.10H957.20M587.10 484.98H957.20M587.10 515.86H957.20M587.10 546.74H957.20M587.10 577.62H957.20M587.10 608.50H957.20M587.10 639.38H957.20" stroke="#d0d0d8" stroke-opacity="0.68" stroke-width="1.2" stroke-dasharray="4 3.9" fill="none"/><path d="M771.5 113V623.4" stroke="#5cd15c" stroke-width="2.2"/><path d="M603 454H940" stroke="#dc6666" stroke-width="2.2"/><path d="M895.5 451L914 454L895.5 457Z" fill="#8a1e1e"/><path d="M643.7 325.6A180.8 180.8 0 1 0 899.8 325.4" stroke="#ffffff" stroke-width="2.8" fill="none"/><path d="M643.7 325.6L771.8 197.5L899.8 325.4" stroke="#ffffff" stroke-width="2.2" fill="none" stroke-linejoin="miter"/><path d="M643.7 325.5H899.8" stroke="#0000f0" stroke-width="3"/><path d="M770.3 316.5H773L773.3 322.5L774.3 323V325.5L773.6 326V328.2L775.3 328.5V330.8H767.8V328.5L769.4 328.2V326L768.8 325.5V323L769.8 322.5Z" fill="#1e8a22" stroke="#176e1a" stroke-width=".4"/><circle cx="771.6" cy="453.8" r="3.6" fill="#0c0c1c"/><circle cx="643.7" cy="325.6" r="3.6" fill="#ff2200"/><circle cx="899.8" cy="325.4" r="3.6" fill="#ff2200"/><circle cx="771.8" cy="197.5" r="3.6" fill="#ff2200"/><path d="M694.47 274.83A71.8 71.8 0 0 1 706.86 291.45M712.54 305.21A71.8 71.8 0 0 1 715.50 325.60" stroke="#ff2a00" stroke-width="2" fill="none"/><path d="M692.6 277.9L697.9 272.6M713 325.7H719.2" stroke="#ff2a00" stroke-width="2.2"/><text x="697" y="302" font-family="Liberation Sans" font-size="11" fill="#b02a2a" stroke="#b02a2a" stroke-width="0.25" textLength="27">45.00</text><g transform="translate(0 0)"><path d="M632.5 313.5L642 323" stroke="#ff2a00" stroke-width="3.8" stroke-linecap="round"/><path d="M628.4 317.4L634 316.2L633.4 313" stroke="#ff2a00" stroke-width="2.8" fill="none"/><path d="M636.8 320L638.3 325.8" stroke="#ff2a00" stroke-width="2.8"/></g><g transform="translate(272.3 0)"><path d="M632.5 313.5L642 323" stroke="#ff2a00" stroke-width="3.8" stroke-linecap="round"/><path d="M628.4 317.4L634 316.2L633.4 313" stroke="#ff2a00" stroke-width="2.8" fill="none"/><path d="M636.8 320L638.3 325.8" stroke="#ff2a00" stroke-width="2.8"/></g><path d="M765.3 193.8C764 188.5 765 183.5 770.5 181.5C773 180.6 776 180.4 777.8 181C779 181.6 779 183 778 183.7C775.5 183.4 772.5 184.2 770.6 186.2C769 188 768.6 191 769.2 194Z" fill="#ff2a00"/><path d="M1128.5 627.5V609" stroke="#1a9a1a" stroke-width="2"/><path d="M1128.5 627.5H1147" stroke="#a01a1a" stroke-width="2"/><circle cx="1128.5" cy="614" r="1.6" fill="#1a9a1a"/><circle cx="1142" cy="627.5" r="1.6" fill="#a01a1a"/><circle cx="1128.5" cy="627.5" r="1.8" fill="#1a1aa0"/><text x="1130" y="611.5" font-family="Liberation Sans" font-size="10" fill="#222">Y</text><text x="1131" y="627" font-family="Liberation Sans" font-size="10" fill="#222">Z</text><text x="1149" y="628" font-family="Liberation Sans" font-size="10" fill="#222">X</text></g></svg>
<div class="a" style="left:387px;top:655px;width:110px;height:29px;border:1px solid #c9c6c1;border-top:none;border-radius:0 0 4px 4px;background:linear-gradient(#dddbd8,#f0efed)"></div>
<div class="a" style="left:497px;top:655px;width:153px;height:31px;border:1px solid #c9c6c1;border-top:none;border-radius:0 0 4px 4px;background:#f8f8f7"></div>
<div class="a t" style="left:395px;top:660.78px;font-size:14.5px;line-height:18px;color:#3c3c3c;letter-spacing:0.077px;">Start page</div>
<div class="a t" style="left:527px;top:661.98px;font-size:14.5px;line-height:18px;color:#3c3c3c;letter-spacing:-0.060px;">Unnamed : 1*</div>
<svg style="left:1170px;top:117px" width="9" height="5"><path d="M1.2 0V4M4.5 0V4M7.6 0V4" stroke="#cfcdc9" stroke-width="1.2"/></svg>
<svg style="left:0;top:0" width="1200" height="692" viewBox="0 0 1200 692"><path d="M473.4 665.6999999999999L482.6 674.9M482.6 665.6999999999999L473.4 674.9" stroke="#5a5958" stroke-width="4"/><path d="M473.4 665.6999999999999L482.6 674.9M482.6 665.6999999999999L473.4 674.9" stroke="#807f7d" stroke-width="2.2"/><path d="M627.9 666.4L637.1 675.6M637.1 666.4L627.9 675.6" stroke="#5a5958" stroke-width="4"/><path d="M627.9 666.4L637.1 675.6M637.1 666.4L627.9 675.6" stroke="#807f7d" stroke-width="2.2"/><path d="M503.5 663.5H511.5V666.5H507V668.5H510.5V671H507V675.7H503.5Z" fill="#f03a14"/><g transform="translate(512 671.3)"><circle r="4.3" fill="none" stroke="#1a3aa8" stroke-width="2" stroke-dasharray="1.6 1.1"/><circle r="2.9" fill="none" stroke="#1a3aa8" stroke-width="2"/></g><circle cx="1175" cy="141" r="4.6" fill="#959492" stroke="#828180" stroke-width=".6"/><path d="M1168 187.5C1163.5 178 1167 167.5 1177.5 166.8C1182 166.5 1185.5 168 1186.5 171C1183.5 170.3 1180.5 170 1177.5 170.5C1172 171.5 1169.5 178 1172 187.5Z" fill="#959492" stroke="#828180" stroke-width=".6"/><circle cx="1171" cy="172" r="3.6" fill="#959492" stroke="#828180" stroke-width=".6"/><rect x="1173.2" y="201" width="3.6" height="23" rx="1" fill="#959492" stroke="#828180" stroke-width=".6"/><rect x="1164" y="246.5" width="22" height="4.2" rx="1" fill="#959492" stroke="#828180" stroke-width=".6"/><path d="M1165 287L1182 275M1168 296L1185 284" stroke="#959492" stroke-width="3.6" stroke-linecap="round"/><rect x="1172.4" y="310" width="5.5" height="17" rx="1" fill="#959492"/><rect x="1165" y="325.5" width="21" height="4.5" rx="1" fill="#959492"/><path d="M1164.5 353C1171 351 1178 354 1178 365.5" stroke="#959492" stroke-width="3.8" fill="none"/><path d="M1172 345.5L1185 359.5" stroke="#959492" stroke-width="4" stroke-linecap="square"/><rect x="1167" y="383.5" width="16.5" height="6" rx="1.2" fill="#959492"/><rect x="1167" y="394" width="16.5" height="6" rx="1.2" fill="#959492"/><path d="M1165 419L1173.9 424.7V430.7L1165 436.5V430L1168.3 427.7L1165 425.5ZM1185 419L1176.1 424.7V430.7L1185 436.5V430L1181.7 427.7L1185 425.5Z" fill="#959492" stroke="#828180" stroke-width=".6"/><path d="M1163 451.5H1187" stroke="#d8d6d2"/><path d="M1169.8 474V470.5C1169.8 462.5 1181.2 462.5 1181.2 470.5V474" stroke="#959492" stroke-width="3.2" fill="none"/><rect x="1166" y="473" width="18.7" height="11.5" rx="1" fill="#959492"/><rect x="1165.5" y="503.5" width="3.8" height="13.5" rx="1" fill="#959492"/><rect x="1182.5" y="503.5" width="3.8" height="13.5" rx="1" fill="#959492"/><rect x="1167" y="508.5" width="18" height="3.8" fill="#959492"/><rect x="1169" y="535" width="13" height="4" rx="1" fill="#959492"/><rect x="1169.3" y="553" width="13" height="4" rx="1" fill="#959492"/><rect x="1173.4" y="536" width="4.4" height="19" fill="#959492"/><path d="M1169 586.5L1182 575" stroke="#959492" stroke-width="3.4"/><path d="M1165 591L1166.5 581.5L1174.5 589.5Z M1186.5 570.5L1185 580L1177 572Z" fill="#959492" stroke="#828180" stroke-width=".5"/><circle cx="1175" cy="616" r="9.3" fill="none" stroke="#959492" stroke-width="3.6"/><path d="M1174 617L1181 611" stroke="#959492" stroke-width="3.6"/><path d="M1185.5 641.5L1167 651.5L1185.5 661.5" stroke="#828180" stroke-width="4.4" fill="none" stroke-linejoin="round"/><path d="M1185.5 641.5L1167 651.5L1185.5 661.5" stroke="#959492" stroke-width="3.2" fill="none" stroke-linejoin="round"/><path d="M1178 646.5V656.5" stroke="#959492" stroke-width="3.4"/><g transform="translate(0 0)"><path d="M35.8 540.8L50.3 553" stroke="#b01800" stroke-width="4.4" stroke-linecap="butt"/><path d="M35.8 540.8L50.3 553" stroke="#ee2200" stroke-width="3.2"/><path d="M30.5 547.3C37.5 546.5 44.3 550 44.3 558.5" stroke="#b01800" stroke-width="4.2" fill="none"/><path d="M30.5 547.3C37.5 546.5 44.3 550 44.3 558.5" stroke="#ee2200" stroke-width="3" fill="none"/></g><g transform="translate(0 26)"><path d="M35.8 540.8L50.3 553" stroke="#b01800" stroke-width="4.4" stroke-linecap="butt"/><path d="M35.8 540.8L50.3 553" stroke="#ee2200" stroke-width="3.2"/><path d="M30.5 547.3C37.5 546.5 44.3 550 44.3 558.5" stroke="#b01800" stroke-width="4.2" fill="none"/><path d="M30.5 547.3C37.5 546.5 44.3 550 44.3 558.5" stroke="#ee2200" stroke-width="3" fill="none"/></g><path d="M32 610.5C31 600 37 593.5 45 593.5L50.5 593.3" stroke="#b01800" stroke-width="4.2" fill="none"/><path d="M32 610.5C31 600 37 593.5 45 593.5L50.5 593.3" stroke="#ee2200" stroke-width="3" fill="none"/><circle cx="37" cy="596.8" r="3.5" fill="#f04a10" stroke="#b01800" stroke-width=".8"/><path d="M49.5 618L32.5 626L49.5 634.5M42.3 621.8V631" stroke="#b01800" stroke-width="4.4" fill="none" stroke-linejoin="round"/><path d="M49.5 618L32.5 626L49.5 634.5M42.3 621.8V631" stroke="#ee2200" stroke-width="3.2" fill="none" stroke-linejoin="round"/></svg>
</body></html>
